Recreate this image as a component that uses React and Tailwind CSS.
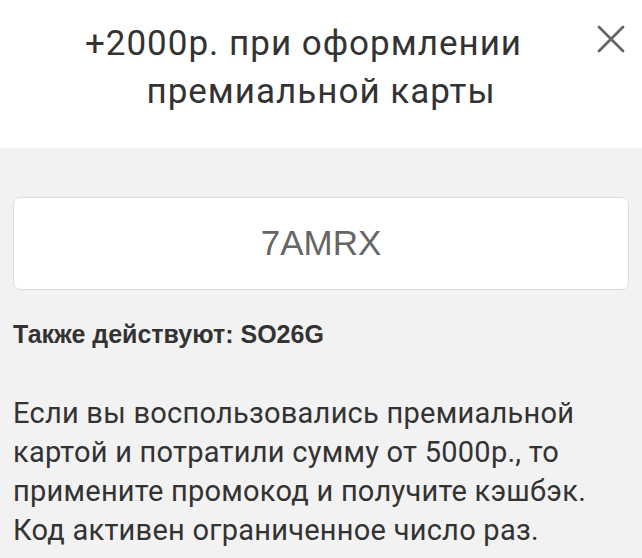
export default function App() {
  return (
    <div className="w-[642px] h-[558px] overflow-hidden bg-[#f2f2f2]" style={{ fontFamily: "Roboto, sans-serif" }}>
      <div className="relative bg-white h-[148px] flex justify-center pt-[20px]">
        <h1 className="flex flex-col items-center text-[35px] leading-[48px] tracking-[1px] text-[#333] font-normal" style={{ fontFamily: "Roboto, sans-serif" }}>
          <span className="pr-[35px] whitespace-nowrap">+2000р. при оформлении</span>
          <span className="whitespace-nowrap">премиальной карты</span>
        </h1>
        <button className="absolute right-[16px] top-[24px] w-[30px] h-[30px] flex items-center justify-center">
          <svg width="28" height="28" viewBox="0 0 28 28" fill="none" stroke="#666" strokeWidth="2.8" strokeLinecap="round">
            <path d="M2 2 L26 26 M26 2 L2 26" />
          </svg>
        </button>
      </div>
      <div className="px-[13px] pt-[49px]">
        <div className="h-[93px] bg-white border border-[#dddddd] rounded-[7px] flex items-center justify-center">
          <span className="text-[35px] text-[#666]" style={{ fontFamily: "'Liberation Sans', Arial, sans-serif" }}>7AMRX</span>
        </div>
        <div className="mt-[29px] text-[25px] font-bold text-[#333] leading-[30px]" style={{ fontFamily: "'Liberation Sans', Arial, sans-serif" }}>
          Также действуют: SO26G
        </div>
        <p className="mt-[45px] text-[29px] leading-[39px] tracking-[0.25px] text-[#333]">
          Если вы воспользовались премиальной картой и потратили сумму от 5000р., то примените промокод и получите кэшбэк. Код активен ограниченное число раз.
        </p>
      </div>
    </div>
  );
}
